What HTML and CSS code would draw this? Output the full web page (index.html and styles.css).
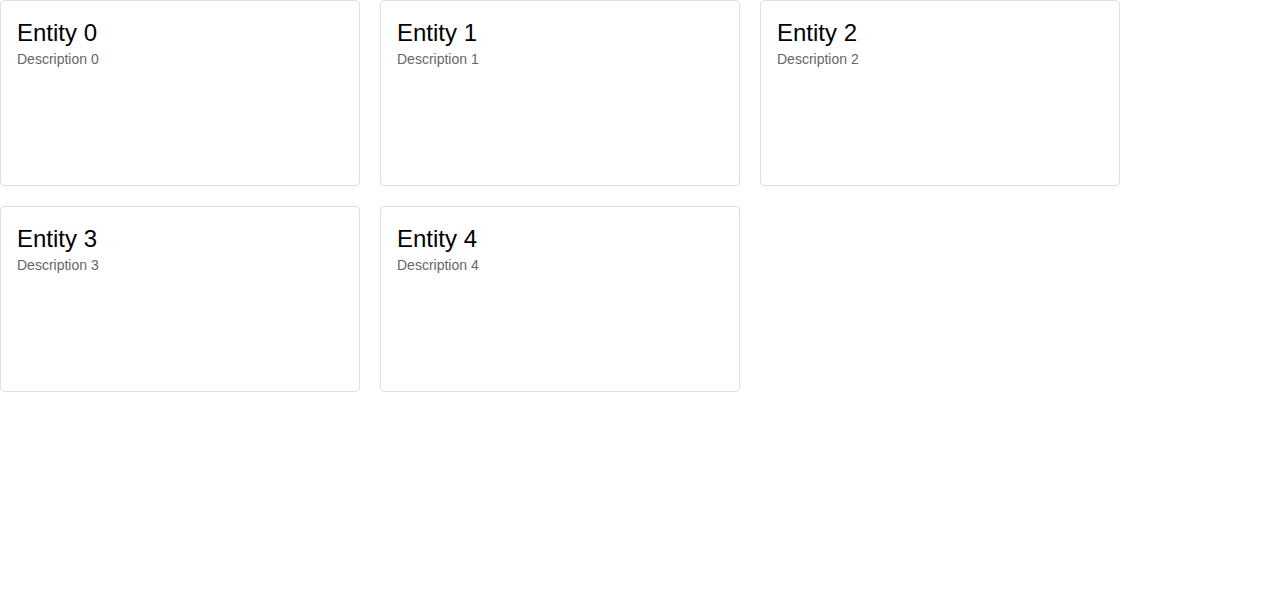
FILE: index.html
```html
<!DOCTYPE html>
<html>
<head>
<meta charset="utf-8">
<link rel="stylesheet" href="styles.css">
</head>
<body>
<div class="grid">
  <div class="card"><h2 class="title">Entity 0</h2><p class="desc">Description 0</p></div>
  <div class="card"><h2 class="title">Entity 1</h2><p class="desc">Description 1</p></div>
  <div class="card"><h2 class="title">Entity 2</h2><p class="desc">Description 2</p></div>
  <div class="card"><h2 class="title">Entity 3</h2><p class="desc">Description 3</p></div>
  <div class="card"><h2 class="title">Entity 4</h2><p class="desc">Description 4</p></div>
</div>
</body>
</html>
```
FILE: styles.css
```css
html, body {
  margin: 0;
  padding: 0;
  background: #fff;
  font-family: "Liberation Sans", Arial, sans-serif;
}
.grid {
  display: grid;
  grid-template-columns: repeat(3, 360px);
  gap: 20px;
}
.card {
  box-sizing: border-box;
  height: 186px;
  border: 1px solid #e0e0e0;
  border-radius: 4px;
  padding: 16px;
}
.title {
  margin: 0;
  font-size: 24px;
  font-weight: 400;
  line-height: 32px;
  color: #000;
}
.desc {
  margin: 0;
  font-size: 14px;
  line-height: 20px;
  color: #666;
}
```
